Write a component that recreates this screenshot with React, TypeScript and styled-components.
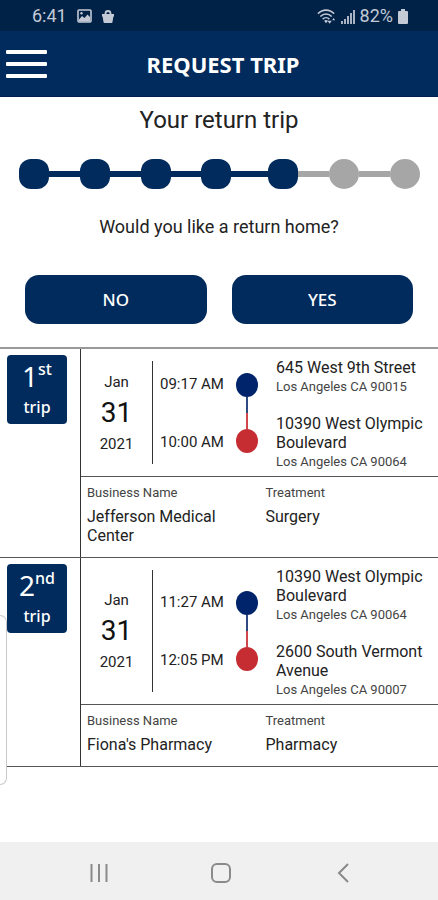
import React from "react";
import styled, { createGlobalStyle } from "styled-components";

const NAVY = "#002b5c";
const ROBOTO = 'Roboto, "Noto Sans", sans-serif';
const NOTO = '"Noto Sans", "Open Sans", sans-serif';

const GlobalStyle = createGlobalStyle`
  *, *::before, *::after { box-sizing: border-box; }
  body { margin: 0; background: #fff; color: #222; font-family: ${ROBOTO}; }
  h1, h2, p, dl, dd, ol { margin: 0; padding: 0; }
  button { border: 0; padding: 0; background: none; font: inherit; color: inherit; cursor: pointer; }
`;

const Screen = styled.div`
  position: relative;
  display: flex;
  flex-direction: column;
  min-height: 100vh;
`;

const StatusBar = styled.div`
  display: flex;
  align-items: center;
  justify-content: space-between;
  height: 31px;
  padding: 1px 30px 0 32px;
  background: #002247;
  color: #c3cad6;
  font-size: 18px;
  line-height: 28px;
`;

const StatusGroup = styled.div<{ $gap: number }>`
  display: flex;
  align-items: center;
  gap: ${(p) => p.$gap}px;
`;

const Header = styled.header`
  display: grid;
  grid-template-columns: 48px 1fr 40px;
  align-items: center;
  height: 66px;
  padding: 0 6px;
  background: ${NAVY};
  border-bottom: 1px solid #001f4e;
`;

const MenuButton = styled.button`
  display: flex;
  flex-direction: column;
  gap: 8px;
  width: 41px;
`;

const MenuLine = styled.span`
  height: 4px;
  width: 100%;
  border-radius: 1px;
  background: #fff;
`;

const Title = styled.h1`
  color: #fff;
  font: 700 22px/30px ${NOTO};
  text-align: center;
`;

const Main = styled.main`
  flex: 1;
`;

const Intro = styled.section`
  display: flex;
  flex-direction: column;
  padding: 8px 0 23px;
`;

const Subtitle = styled.h2`
  font-size: 24px;
  font-weight: 400;
  line-height: 30px;
  text-align: center;
`;

const Steps = styled.ol`
  display: flex;
  align-items: center;
  list-style: none;
  && { margin-top: 24px; padding: 0 18px 0 19px; }
`;

const Step = styled.li<{ $done: boolean; $linked: boolean; $extra: number }>`
  display: flex;
  align-items: center;
  flex: ${(p) => (p.$linked ? `1 1 ${p.$extra}px` : "none")};
  &::before {
    content: "";
    flex: none;
    width: 30px;
    height: 30px;
    border-radius: ${(p) => (p.$done ? "12px" : "50%")};
    background: ${(p) => (p.$done ? NAVY : "#a6a6a6")};
  }
`;

const StepLink = styled.span<{ $done: boolean }>`
  flex: 1;
  height: 6px;
  background: ${(p) => (p.$done ? NAVY : "#a6a6a6")};
`;

const Question = styled.p`
  && { margin-top: 26px; }
  font-size: 18px;
  line-height: 24px;
  text-align: center;
`;

const Answers = styled.div`
  display: grid;
  grid-template-columns: 1fr 1fr;
  gap: 25px;
  margin-top: 36px;
  padding: 0 25px;
`;

const AnswerButton = styled.button`
  && { background: ${NAVY}; color: #fff; font: 500 17px/24px ${NOTO}; }
  height: 49px;
  border-radius: 14px;
`;

const Trips = styled.div`
  border-top: 2px solid #999;
`;

const Trip = styled.article`
  display: grid;
  grid-template-columns: 80px 1fr;
  border-bottom: 1px solid #555;
`;

const BadgeCell = styled.div`
  padding: 6px 7px;
`;

const Badge = styled.div`
  display: flex;
  flex-direction: column;
  align-items: center;
  width: 60px;
  height: 69px;
  padding-top: 2px;
  border-radius: 4px;
  background: ${NAVY};
  color: #fff;
  font-family: ${NOTO};
`;

const Ordinal = styled.span`
  display: flex;
  align-items: flex-start;
  font-size: 28px;
  line-height: 38px;
`;

const Suffix = styled.span`
  font-size: 16px;
  font-weight: 500;
  line-height: 24px;
`;

const BadgeWord = styled.span`
  font-size: 16px;
  font-weight: 500;
  line-height: 24px;
`;

const TripBody = styled.div`
  border-left: 1px solid #333;
`;

const Schedule = styled.div`
  display: grid;
  grid-template-columns: 72px 78px 32px 1fr;
  border-bottom: 1px solid #555;
`;

const DateBlock = styled.time`
  display: flex;
  flex-direction: column;
  align-items: center;
  justify-content: center;
  margin: 12px 0;
  border-right: 1px solid #333;
  font-size: 15px;
  line-height: 26px;
`;

const Day = styled.span`
  font-size: 28px;
  line-height: 36px;
  color: #111;
`;

const Times = styled.div`
  display: flex;
  flex-direction: column;
  justify-content: center;
  gap: 38px;
  padding-left: 7px;
  font-size: 15px;
  line-height: 20px;
  white-space: nowrap;
`;

const Route = styled.div`
  display: flex;
  flex-direction: column;
  align-items: center;
  justify-content: center;
`;

const Dot = styled.span<{ $color: string }>`
  width: 22px;
  height: 24px;
  border-radius: 50%;
  background: ${(p) => p.$color};
`;

const RouteLine = styled.span<{ $color: string }>`
  width: 2px;
  height: 16px;
  background: ${(p) => p.$color};
`;

const Stops = styled.div`
  display: flex;
  flex-direction: column;
  gap: 17px;
  padding: 9px 4px 4px 13px;
`;

const Street = styled.p`
  font-size: 16px;
  line-height: 19px;
`;

const City = styled.p`
  font-size: 13px;
  line-height: 20px;
  color: #444;
`;

const Details = styled.dl`
  display: grid;
  grid-template-columns: 1fr 1fr;
`;

const Detail = styled.div`
  padding: 6px 24px 12px 6px;
`;

const Label = styled.dt`
  font-size: 13px;
  line-height: 20px;
  color: #444;
`;

const Value = styled.dd`
  && { margin-top: 4px; }
  font-size: 16px;
  line-height: 19px;
`;

const EdgeHandle = styled.div`
  position: absolute;
  left: 0;
  bottom: 115px;
  width: 7px;
  height: 170px;
  border: 1px solid #c8c8c8;
  border-left: 0;
  border-radius: 0 7px 7px 0;
  background: #fff;
`;

const NavBar = styled.nav`
  display: grid;
  grid-template-columns: repeat(3, 1fr);
  height: 58px;
  padding: 3px 34px 0 38px;
  background: #f0f0f0;
`;

const NavButton = styled.button`
  display: flex;
  align-items: center;
  justify-content: center;
`;

const PictureIcon = () => (
  <svg width="15" height="14" viewBox="0 0 15 14" aria-hidden="true">
    <rect x="1" y="1" width="13" height="12" rx="1" fill="none" stroke="#c3cad6" strokeWidth="1.6" />
    <path d="M2 10.5 5 7l2.5 2L10.5 5.500 13 8v4.500H2z" fill="#c3cad6" />
    <circle cx="4.500" cy="4.300" r="1.200" fill="#c3cad6" />
  </svg>
);

const BagIcon = () => (
  <svg width="12" height="13" viewBox="0 0 12 13" aria-hidden="true">
    <path d="M3.500 5V3.500a2.500 2.500 0 0 1 5 0V5" fill="none" stroke="#c3cad6" strokeWidth="1.800" />
    <path d="M0 4h12v2.500h-.6L10.500 12q-.2 1-1 1h-7q-.8 0-1-1L.6 6.500H0z" fill="#c3cad6" />
  </svg>
);

const WifiIcon = () => (
  <svg width="19" height="17" viewBox="0 0 20 17" aria-hidden="true">
    <g fill="none" stroke="#c3cad6" strokeWidth="1.700">
      <path d="M1 5.500c5-5 12-5 17 0" />
      <path d="M3.500 8.500c3.500-3.500 8.500-3.500 12 0" />
      <path d="M6 11.300c2-2 5-2 7 0" />
    </g>
    <path d="m9.500 15.500-2-2.500q2-1.500 4 0z" fill="#c3cad6" />
    <path d="m11 13 2.300 3 2.200-3zM16 12.500l1.500-2.500 1.500 2.500z" fill="#c3cad6" />
  </svg>
);

const SignalIcon = () => (
  <svg width="14" height="15" viewBox="0 0 14 15" aria-hidden="true">
    <path d="M0 12h2v3H0zM3 10h2v5H3zM6 7h2v8H6zM9 4h2v11H9zM12 1h2v14h-2z" fill="#a8b3c3" />
  </svg>
);

const BatteryIcon = () => (
  <svg width="10" height="15" viewBox="0 0 10 15" aria-hidden="true">
    <path d="M3 0h4v2h2a1 1 0 0 1 1 1v11a1 1 0 0 1-1 1H1a1 1 0 0 1-1-1V3a1 1 0 0 1 1-1h2z" fill="#c3cad6" />
  </svg>
);

type Stop = { time: string; street: string; city: string };
type TripData = { n: string; suffix: string; stops: Stop[]; business: string; treatment: string };

const trips: TripData[] = [
  {
    n: "1",
    suffix: "st",
    stops: [
      { time: "09:17 AM", street: "645 West 9th Street", city: "Los Angeles CA 90015" },
      { time: "10:00 AM", street: "10390 West Olympic Boulevard", city: "Los Angeles CA 90064" },
    ],
    business: "Jefferson Medical Center",
    treatment: "Surgery",
  },
  {
    n: "2",
    suffix: "nd",
    stops: [
      { time: "11:27 AM", street: "10390 West Olympic Boulevard", city: "Los Angeles CA 90064" },
      { time: "12:05 PM", street: "2600 South Vermont Avenue", city: "Los Angeles CA 90007" },
    ],
    business: "Fiona's Pharmacy",
    treatment: "Pharmacy",
  },
];

const TOTAL_STEPS = 7;
const DONE_STEPS = 5;

export default function App() {
  return (
    <Screen>
      <GlobalStyle />
      <StatusBar>
        <StatusGroup $gap={10}>
          <span>6:41</span>
          <PictureIcon />
          <BagIcon />
        </StatusGroup>
        <StatusGroup $gap={5}>
          <WifiIcon />
          <SignalIcon />
          <span>82%</span>
          <BatteryIcon />
        </StatusGroup>
      </StatusBar>
      <Header>
        <MenuButton type="button" aria-label="Menu">
          <MenuLine />
          <MenuLine />
          <MenuLine />
        </MenuButton>
        <Title>REQUEST TRIP</Title>
      </Header>
      <Main>
        <Intro>
          <Subtitle>Your return trip</Subtitle>
          <Steps aria-label="Progress">
            {Array.from({ length: TOTAL_STEPS }, (_, i) => (
              <Step
                key={i}
                $done={i < DONE_STEPS}
                $linked={i < TOTAL_STEPS - 1}
                $extra={i === DONE_STEPS - 2 ? 36 : 30}
              >
                {i < TOTAL_STEPS - 1 && <StepLink $done={i < DONE_STEPS - 1} />}
              </Step>
            ))}
          </Steps>
          <Question>Would you like a return home?</Question>
          <Answers>
            <AnswerButton type="button">NO</AnswerButton>
            <AnswerButton type="button">YES</AnswerButton>
          </Answers>
        </Intro>
        <Trips>
          {trips.map((trip) => (
            <Trip key={trip.n}>
              <BadgeCell>
                <Badge>
                  <Ordinal>
                    {trip.n}
                    <Suffix>{trip.suffix}</Suffix>
                  </Ordinal>
                  <BadgeWord>trip</BadgeWord>
                </Badge>
              </BadgeCell>
              <TripBody>
                <Schedule>
                  <DateBlock dateTime="2021-01-31">
                    <span>Jan</span>
                    <Day>31</Day>
                    <span>2021</span>
                  </DateBlock>
                  <Times>
                    {trip.stops.map((s) => (
                      <time key={s.time}>{s.time}</time>
                    ))}
                  </Times>
                  <Route>
                    <Dot $color="#00246b" />
                    <RouteLine $color="#2f4a80" />
                    <RouteLine $color="#d0474b" />
                    <Dot $color="#c62d33" />
                  </Route>
                  <Stops>
                    {trip.stops.map((s) => (
                      <div key={s.street}>
                        <Street>{s.street}</Street>
                        <City>{s.city}</City>
                      </div>
                    ))}
                  </Stops>
                </Schedule>
                <Details>
                  <Detail>
                    <Label>Business Name</Label>
                    <Value>{trip.business}</Value>
                  </Detail>
                  <Detail>
                    <Label>Treatment</Label>
                    <Value>{trip.treatment}</Value>
                  </Detail>
                </Details>
              </TripBody>
            </Trip>
          ))}
        </Trips>
      </Main>
      <EdgeHandle />
      <NavBar aria-label="System">
        <NavButton type="button" aria-label="Recent apps">
          <svg width="18" height="20" viewBox="0 0 18 20" aria-hidden="true">
            <path d="M1.500 1v18M9 1v18M16.500 1v18" stroke="#8a8a8a" strokeWidth="2" />
          </svg>
        </NavButton>
        <NavButton type="button" aria-label="Home">
          <svg width="20" height="20" viewBox="0 0 20 20" aria-hidden="true">
            <rect x="1" y="1" width="18" height="18" rx="5" fill="none" stroke="#8a8a8a" strokeWidth="2" />
          </svg>
        </NavButton>
        <NavButton type="button" aria-label="Back">
          <svg width="12" height="20" viewBox="0 0 12 20" aria-hidden="true">
            <path d="M11 1 2 10l9 9" fill="none" stroke="#8a8a8a" strokeWidth="2" />
          </svg>
        </NavButton>
      </NavBar>
    </Screen>
  );
}
